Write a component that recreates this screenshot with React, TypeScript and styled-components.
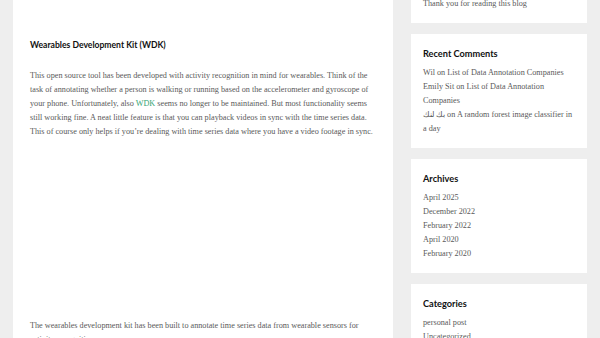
import React from "react";
import styled, { createGlobalStyle } from "styled-components";

const Global = createGlobalStyle`
  html, body { margin: 0; padding: 0; background: #eeeeee; overflow: hidden; }
  body { width: 600px; height: 338px; }
`;

const Page = styled.div`
  display: flex;
  align-items: flex-start;
  gap: 18px;
  padding: 0 13px;
  margin-top: -12px;
`;

const Main = styled.main`
  width: 380px;
  flex: none;
  background: #ffffff;
  padding: 0 15px 40px 17px;
  box-sizing: border-box;
`;

const Para = styled.p<{ $gapTop?: number }>`
  margin: ${(p) => p.$gapTop ?? 0}px 0 0;
  font-family: "Liberation Serif", "Times New Roman", serif;
  font-size: 8.2px;
  line-height: 14px;
  color: #5a5a5a;
`;

const Link = styled.a`
  color: #33a474;
  text-decoration: none;
`;

const Heading = styled.h2<{ $gapTop?: number }>`
  margin: ${(p) => p.$gapTop ?? 0}px 0 0;
  font-family: Lato, "Open Sans", sans-serif;
  font-weight: 700;
  font-size: 8.6px;
  line-height: 14px;
  color: #111111;
`;

const VideoSpace = styled.div`
  height: 180px;
`;

const Sidebar = styled.aside`
  width: 176px;
  flex: none;
  display: flex;
  flex-direction: column;
  gap: 11px;
`;

const Widget = styled.section<{ $top?: number }>`
  background: #ffffff;
  padding: ${(p) => p.$top ?? 13}px 12px 12px;
`;

const WidgetTitle = styled.h3`
  margin: 0 0 5px;
  font-family: Lato, "Open Sans", sans-serif;
  font-weight: 700;
  font-size: 9.2px;
  line-height: 14px;
  color: #111111;
`;

const List = styled.ul`
  list-style: none;
  margin: 0;
  padding: 0;
`;

const Item = styled.li`
  font-family: "Liberation Serif", "Times New Roman", serif;
  font-size: 8.2px;
  line-height: 14px;
  color: #5a5a5a;
`;

export default function App() {
  return (
    <>
      <Global />
      <Page>
        <Main>
          <Para>
            significantly speed up the labeling, but you need to get your data into the right format for the tool first.
          </Para>
          <Heading $gapTop={36}>Wearables Development Kit (WDK)</Heading>
          <Para $gapTop={17}>
            This open source tool has been developed with activity recognition in mind for wearables. Think of the
            task of annotating whether a person is walking or running based on the accelerometer and gyroscope of
            your phone. Unfortunately, also <Link href="#">WDK</Link> seems no longer to be maintained. But most
            functionality seems still working fine. A neat little feature is that you can playback videos in sync
            with the time series data. This of course only helps if you’re dealing with time series data where you
            have a video footage in sync.
          </Para>
          <VideoSpace />
          <Para>
            The wearables development kit has been built to annotate time series data from wearable sensors for
            activity recognition.
          </Para>
        </Main>
        <Sidebar>
          <Widget $top={9}>
            <Item as="div">Thank you for reading this blog</Item>
          </Widget>
          <Widget>
            <WidgetTitle>Recent Comments</WidgetTitle>
            <List>
              <Item>Wil on List of Data Annotation Companies</Item>
              <Item>Emily Sit on List of Data Annotation Companies</Item>
              <Item>
                <bdi>بك لنك</bdi> on A random forest image classifier in a day
              </Item>
            </List>
          </Widget>
          <Widget>
            <WidgetTitle>Archives</WidgetTitle>
            <List>
              <Item>April 2025</Item>
              <Item>December 2022</Item>
              <Item>February 2022</Item>
              <Item>April 2020</Item>
              <Item>February 2020</Item>
            </List>
          </Widget>
          <Widget>
            <WidgetTitle>Categories</WidgetTitle>
            <List>
              <Item>personal post</Item>
              <Item>Uncategorized</Item>
            </List>
          </Widget>
        </Sidebar>
      </Page>
    </>
  );
}
